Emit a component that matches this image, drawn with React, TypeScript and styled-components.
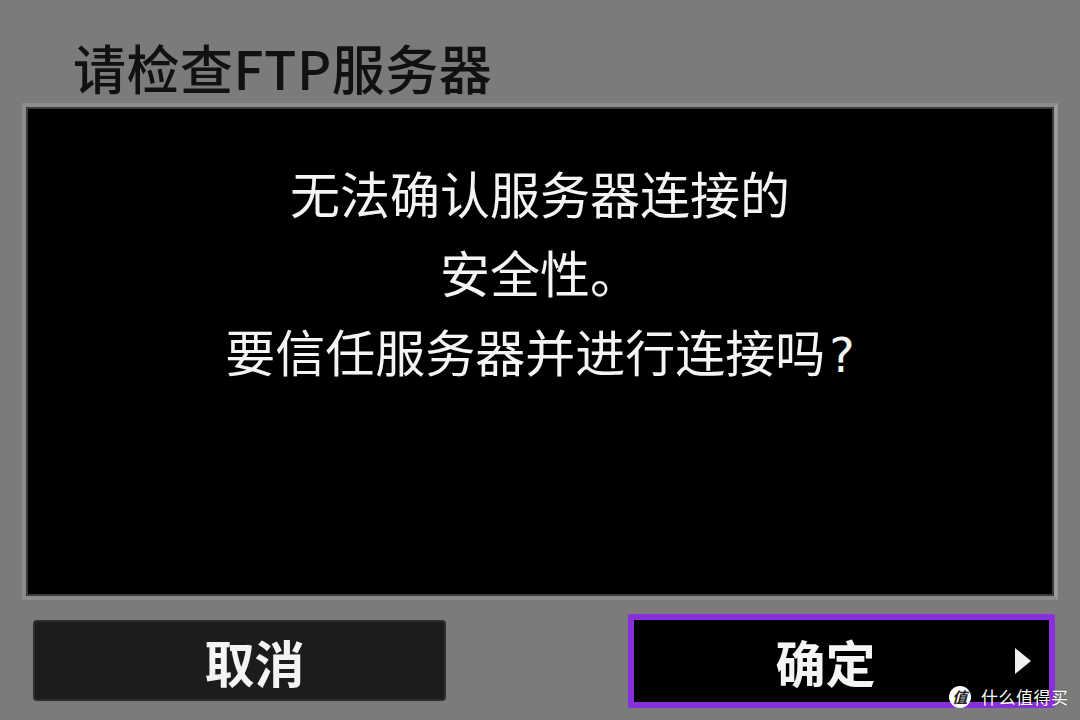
import React from 'react';
import styled, { createGlobalStyle } from 'styled-components';

const GlobalStyle = createGlobalStyle`
  html, body {
    margin: 0;
    padding: 0;
    background: #7b7b7b;
  }
`;

const CJK = `"Noto Sans CJK SC", "Noto Sans", sans-serif`;

const StyledScreen = styled.div`
  position: relative;
  width: 1080px;
  height: 720px;
  box-sizing: border-box;
  padding: 0 22px;
  display: flex;
  flex-direction: column;
  background: #7b7b7b;
  font-family: ${CJK};
  overflow: hidden;
`;

const StyledTitle = styled.div`
  height: 103px;
  box-sizing: border-box;
  padding: 31px 0 0 51px;
  display: flex;
  align-items: center;
  font-size: 53px;
  font-weight: 500;
  color: #111;
  letter-spacing: 0.5px;
`;

const StyledPanel = styled.div`
  height: 497px;
  box-sizing: border-box;
  border: 4px solid #8c8c8c;
  border-right-color: #9a9a9a;
  box-shadow: inset 0 0 0 2px #3c3c3c;
  background: #000;
  padding-top: 46px;
  display: flex;
  flex-direction: column;
  align-items: center;
`;

const StyledLine = styled.div`
  font-size: 50px;
  line-height: 79px;
  color: #f4f4f4;
  white-space: nowrap;
`;

// the question mark on the camera screen is wide and sits low
const StyledMark = styled.span`
  display: inline-block;
  font-family: "DejaVu Sans", sans-serif;
  font-size: 48px;
  margin-left: 4px;
`;

const StyledFooter = styled.div`
  height: 112px;
  box-sizing: border-box;
  padding: 9px 3px 0 11px;
  display: flex;
  justify-content: space-between;
  align-items: center;
`;

interface StyledButtonProps {
  active?: boolean;
}

const StyledButton = styled.div<StyledButtonProps>`
  position: relative;
  box-sizing: border-box;
  display: flex;
  align-items: center;
  justify-content: center;
  width: ${({ active }) => (active ? 427 : 413)}px;
  height: ${({ active }) => (active ? 94 : 81)}px;
  padding: ${({ active }) => (active ? '0 32px 0 0' : '0 0 0 30px')};
  border: ${({ active }) => (active ? '6px solid #8a2fdc' : '2px solid #2e2e2e')};
  border-radius: ${({ active }) => (active ? 2 : 4)}px;
  background: ${({ active }) => (active ? '#000' : '#1c1c1c')};
  color: #f4f4f4;
  font-size: 50px;
  font-weight: 700;
`;

const StyledArrow = styled.span`
  position: absolute;
  right: 18px;
  top: 50%;
  margin-top: -13px;
  width: 0;
  height: 0;
  border-top: 13px solid transparent;
  border-bottom: 13px solid transparent;
  border-left: 16px solid #f0f0f0;
`;

const StyledWatermark = styled.div`
  position: absolute;
  left: 949px;
  top: 684px;
  display: flex;
  align-items: center;
  gap: 10px;
  color: #fff;
  font-size: 17px;
  letter-spacing: 0.5px;
  text-shadow: 0 0 2px rgba(0, 0, 0, 0.35);
`;

const StyledBadge = styled.span`
  width: 22px;
  height: 22px;
  border-radius: 50%;
  background: #fff;
  color: #222;
  font-size: 15px;
  font-weight: 700;
  font-style: italic;
  display: flex;
  align-items: center;
  justify-content: center;
  text-shadow: none;
`;

export default function App(): JSX.Element {
  return (
    <>
      <GlobalStyle />
      <StyledScreen>
        <StyledTitle>请检查FTP服务器</StyledTitle>
        <StyledPanel>
          <StyledLine>无法确认服务器连接的</StyledLine>
          <StyledLine>安全性。</StyledLine>
          <StyledLine>
            要信任服务器并进行连接吗<StyledMark>?</StyledMark>
          </StyledLine>
        </StyledPanel>
        <StyledFooter>
          <StyledButton>取消</StyledButton>
          <StyledButton active>
            确定
            <StyledArrow />
          </StyledButton>
        </StyledFooter>
        <StyledWatermark>
          <StyledBadge>值</StyledBadge>
          什么值得买
        </StyledWatermark>
      </StyledScreen>
    </>
  );
}
